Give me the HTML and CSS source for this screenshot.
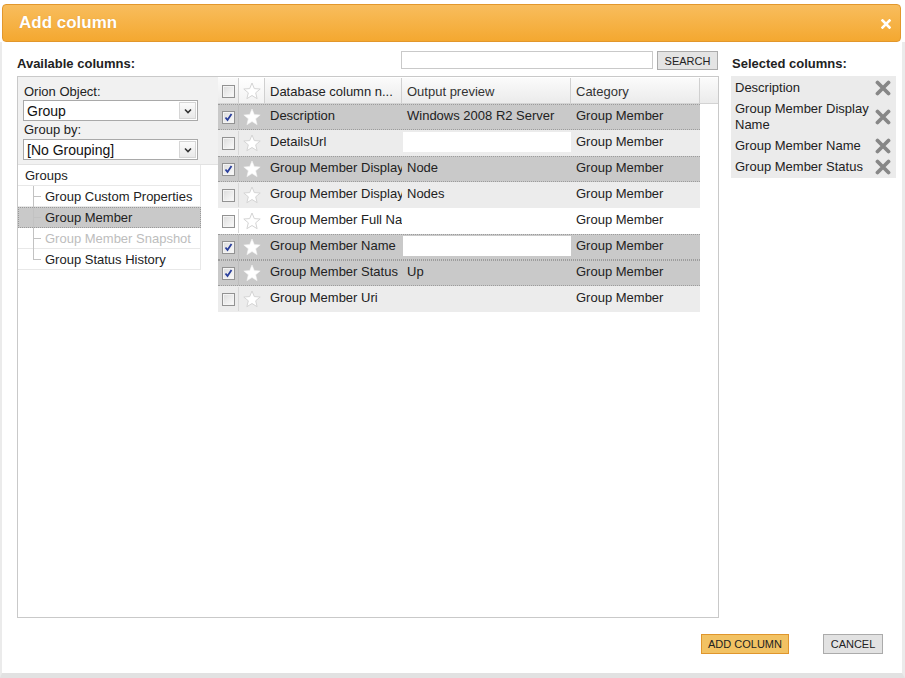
FILE: index.html
```html
<!DOCTYPE html>
<html>
<head>
<meta charset="utf-8">
<title>Add column</title>
<link rel="stylesheet" href="styles.css">
</head>
<body>
<div class="window">
  <div class="titlebar">
    <span class="title">Add column</span>
    <svg class="close" width="10" height="10" viewBox="0 0 10 10"><path d="M1.5 1.5 L8.5 8.5 M8.5 1.5 L1.5 8.5" stroke="#fff" stroke-width="2.6" stroke-linecap="square"/></svg>
  </div>
  <div class="dialog-body">
    <div class="layout">
      <div class="toolbar">
        <div class="section-title">Available columns:</div>
        <input class="search-input" type="text">
        <button class="btn btn-search">SEARCH</button>
      </div>
      <div class="section-title selected-title">Selected columns:</div>

      <div class="main-box">
        <div class="left-pane">
          <div class="filters">
            <div class="filter-label">Orion Object:</div>
            <div class="select"><span class="select-text">Group</span><span class="select-btn"><svg width="8" height="6" viewBox="0 0 8 6"><path d="M1 1.5 L4 4.5 L7 1.5" fill="none" stroke="#333" stroke-width="1.6"/></svg></span></div>
            <div class="filter-label">Group by:</div>
            <div class="select"><span class="select-text">[No Grouping]</span><span class="select-btn"><svg width="8" height="6" viewBox="0 0 8 6"><path d="M1 1.5 L4 4.5 L7 1.5" fill="none" stroke="#333" stroke-width="1.6"/></svg></span></div>
          </div>
          <div class="tree">
            <div class="tree-row tree-root">Groups</div>
            <div class="tree-row tree-child">Group Custom Properties</div>
            <div class="tree-row tree-child is-selected">Group Member</div>
            <div class="tree-row tree-child is-disabled">Group Member Snapshot</div>
            <div class="tree-row tree-child is-last">Group Status History</div>
          </div>
        </div>

        <div class="grid-pane">
          <div class="grid-head">
            <div class="c-cb"><span class="cb"></span></div>
            <div class="c-star head-star"><svg class="star" width="18" height="18" viewBox="0 0 18 18"><polygon points="9,1 11.3,6.6 17.2,7 12.7,10.8 14.1,16.7 9,13.5 3.9,16.7 5.3,10.8 0.8,7 6.7,6.6" fill="#fff" stroke="#d4d4d4" stroke-width="1"/></svg></div>
            <div class="c-name">Database column n...</div>
            <div class="c-prev">Output preview</div>
            <div class="c-cat">Category</div>
            <div class="c-fill"></div>
          </div>

          <div class="grid-row is-sel">
            <div class="c-cb"><span class="cb on"><svg width="9" height="9" viewBox="0 0 9 9"><path d="M1.5 4.5 L3.5 7 L7.5 1" fill="none" stroke="#2a3f9c" stroke-width="1.8"/></svg></span></div>
            <div class="c-star"><svg class="star" width="18" height="18" viewBox="0 0 18 18"><polygon points="9,1 11.3,6.6 17.2,7 12.7,10.8 14.1,16.7 9,13.5 3.9,16.7 5.3,10.8 0.8,7 6.7,6.6" fill="#fff" stroke="#f2f2f2" stroke-width="0.6"/></svg></div>
            <div class="c-name">Description</div>
            <div class="c-prev">Windows 2008 R2 Server</div>
            <div class="c-cat">Group Member</div>
          </div>

          <div class="grid-row is-alt">
            <div class="c-cb"><span class="cb"></span></div>
            <div class="c-star"><svg class="star" width="18" height="18" viewBox="0 0 18 18"><polygon points="9,1 11.3,6.6 17.2,7 12.7,10.8 14.1,16.7 9,13.5 3.9,16.7 5.3,10.8 0.8,7 6.7,6.6" fill="#fff" stroke="#d4d4d4" stroke-width="1"/></svg></div>
            <div class="c-name">DetailsUrl</div>
            <div class="c-prev"><span class="blank"></span></div>
            <div class="c-cat">Group Member</div>
          </div>

          <div class="grid-row is-sel">
            <div class="c-cb"><span class="cb on"><svg width="9" height="9" viewBox="0 0 9 9"><path d="M1.5 4.5 L3.5 7 L7.5 1" fill="none" stroke="#2a3f9c" stroke-width="1.8"/></svg></span></div>
            <div class="c-star"><svg class="star" width="18" height="18" viewBox="0 0 18 18"><polygon points="9,1 11.3,6.6 17.2,7 12.7,10.8 14.1,16.7 9,13.5 3.9,16.7 5.3,10.8 0.8,7 6.7,6.6" fill="#fff" stroke="#f2f2f2" stroke-width="0.6"/></svg></div>
            <div class="c-name">Group Member Display Name</div>
            <div class="c-prev">Node</div>
            <div class="c-cat">Group Member</div>
          </div>

          <div class="grid-row is-alt">
            <div class="c-cb"><span class="cb"></span></div>
            <div class="c-star"><svg class="star" width="18" height="18" viewBox="0 0 18 18"><polygon points="9,1 11.3,6.6 17.2,7 12.7,10.8 14.1,16.7 9,13.5 3.9,16.7 5.3,10.8 0.8,7 6.7,6.6" fill="#fff" stroke="#d4d4d4" stroke-width="1"/></svg></div>
            <div class="c-name">Group Member Display Name</div>
            <div class="c-prev">Nodes</div>
            <div class="c-cat">Group Member</div>
          </div>

          <div class="grid-row">
            <div class="c-cb"><span class="cb"></span></div>
            <div class="c-star"><svg class="star" width="18" height="18" viewBox="0 0 18 18"><polygon points="9,1 11.3,6.6 17.2,7 12.7,10.8 14.1,16.7 9,13.5 3.9,16.7 5.3,10.8 0.8,7 6.7,6.6" fill="#fff" stroke="#d4d4d4" stroke-width="1"/></svg></div>
            <div class="c-name">Group Member Full Name</div>
            <div class="c-prev"></div>
            <div class="c-cat">Group Member</div>
          </div>

          <div class="grid-row is-sel">
            <div class="c-cb"><span class="cb on"><svg width="9" height="9" viewBox="0 0 9 9"><path d="M1.5 4.5 L3.5 7 L7.5 1" fill="none" stroke="#2a3f9c" stroke-width="1.8"/></svg></span></div>
            <div class="c-star"><svg class="star" width="18" height="18" viewBox="0 0 18 18"><polygon points="9,1 11.3,6.6 17.2,7 12.7,10.8 14.1,16.7 9,13.5 3.9,16.7 5.3,10.8 0.8,7 6.7,6.6" fill="#fff" stroke="#f2f2f2" stroke-width="0.6"/></svg></div>
            <div class="c-name">Group Member Name</div>
            <div class="c-prev"><span class="blank"></span></div>
            <div class="c-cat">Group Member</div>
          </div>

          <div class="grid-row is-sel">
            <div class="c-cb"><span class="cb on"><svg width="9" height="9" viewBox="0 0 9 9"><path d="M1.5 4.5 L3.5 7 L7.5 1" fill="none" stroke="#2a3f9c" stroke-width="1.8"/></svg></span></div>
            <div class="c-star"><svg class="star" width="18" height="18" viewBox="0 0 18 18"><polygon points="9,1 11.3,6.6 17.2,7 12.7,10.8 14.1,16.7 9,13.5 3.9,16.7 5.3,10.8 0.8,7 6.7,6.6" fill="#fff" stroke="#f2f2f2" stroke-width="0.6"/></svg></div>
            <div class="c-name">Group Member Status</div>
            <div class="c-prev">Up</div>
            <div class="c-cat">Group Member</div>
          </div>

          <div class="grid-row is-alt">
            <div class="c-cb"><span class="cb"></span></div>
            <div class="c-star"><svg class="star" width="18" height="18" viewBox="0 0 18 18"><polygon points="9,1 11.3,6.6 17.2,7 12.7,10.8 14.1,16.7 9,13.5 3.9,16.7 5.3,10.8 0.8,7 6.7,6.6" fill="#fff" stroke="#d4d4d4" stroke-width="1"/></svg></div>
            <div class="c-name">Group Member Uri</div>
            <div class="c-prev"></div>
            <div class="c-cat">Group Member</div>
          </div>
        </div>
      </div>

      <div class="selected-panel">
        <div class="sel-item"><span class="sel-text">Description</span><svg class="remove" width="16" height="16" viewBox="0 0 16 16"><path d="M2.5 2.5 L13.5 13.5 M13.5 2.5 L2.5 13.5" stroke="#878787" stroke-width="3.8" stroke-linecap="round"/></svg></div>
        <div class="sel-item"><span class="sel-text">Group Member Display Name</span><svg class="remove" width="16" height="16" viewBox="0 0 16 16"><path d="M2.5 2.5 L13.5 13.5 M13.5 2.5 L2.5 13.5" stroke="#878787" stroke-width="3.8" stroke-linecap="round"/></svg></div>
        <div class="sel-item"><span class="sel-text">Group Member Name</span><svg class="remove" width="16" height="16" viewBox="0 0 16 16"><path d="M2.5 2.5 L13.5 13.5 M13.5 2.5 L2.5 13.5" stroke="#878787" stroke-width="3.8" stroke-linecap="round"/></svg></div>
        <div class="sel-item"><span class="sel-text">Group Member Status</span><svg class="remove" width="16" height="16" viewBox="0 0 16 16"><path d="M2.5 2.5 L13.5 13.5 M13.5 2.5 L2.5 13.5" stroke="#878787" stroke-width="3.8" stroke-linecap="round"/></svg></div>
      </div>
    </div>

    <div class="footer">
      <button class="btn btn-primary">ADD COLUMN</button>
      <button class="btn btn-cancel">CANCEL</button>
    </div>
  </div>
</div>
</body>
</html>
```
FILE: styles.css
```css
* { box-sizing: border-box; }
html, body { margin: 0; padding: 0; background: #fff; }
body {
  font-family: "Liberation Sans", Arial, sans-serif;
  font-size: 13px;
  color: #333;
}
.window { width: 905px; height: 678px; }

.titlebar {
  margin: 4px 4px 0 2px;
  height: 38px;
  border: 1px solid #e2972c;
  border-radius: 4px;
  background: linear-gradient(#f8bd5d, #f4a830);
  display: flex;
  align-items: center;
  justify-content: space-between;
  padding: 0 9px 0 16px;
}
.title {
  color: #fff;
  font-weight: bold;
  font-size: 17px;
  text-shadow: 0 0 1px rgba(150, 90, 0, 0.3);
}
.close { display: block; margin-top: 1px; }

.dialog-body {
  height: 636px;
  border-left: 2px solid #ebebeb;
  border-right: 3px solid #ebebeb;
  border-bottom: 5px solid #e2e2e2;
  padding: 9px 0 0 15px;
}
.layout {
  display: grid;
  grid-template-columns: 702px 165px;
  grid-template-rows: 25px 542px;
  column-gap: 12px;
}
.section-title {
  font-weight: bold;
  font-size: 13px;
  color: #222;
  padding-top: 5px;
}
.selected-title { padding-left: 1px; }
.toolbar { display: flex; align-items: flex-start; }
.toolbar .section-title { flex: 1; }
.search-input {
  width: 252px;
  height: 18px;
  border: 1px solid #c9c9c9;
  margin: 0 0 0 -1px;
  padding: 0 3px;
  font: inherit;
}
.btn {
  font-family: "Liberation Sans", Arial, sans-serif;
  font-size: 11px;
  color: #222;
  padding: 0;
  margin: 0;
  cursor: pointer;
}
.btn-search {
  width: 61px;
  height: 19px;
  margin-left: 4px;
  margin-right: 1px;
  background: #e4e4e4;
  border: 1px solid #ababab;
}

.main-box {
  border: 1px solid #c9c9c9;
  display: flex;
}
.left-pane { width: 200px; flex: none; }
.filters {
  background: #f1f1f1;
  height: 88px;
  padding: 7px 0 0 5px;
  border-bottom: 1px solid #e2e2e2;
}
.filter-label { line-height: 15px; color: #222; padding-left: 1px; }
.select {
  width: 175px;
  height: 21px;
  border: 1px solid #a9a9a9;
  background: #fff;
  display: flex;
  align-items: center;
  justify-content: space-between;
  margin: 1px 0 1px;
  padding: 0 1px 0 3px;
}
.filters .filter-label + .select + .filter-label + .select { margin-top: 2px; }
.select-text { font-size: 14px; color: #111; }
.select-btn {
  width: 17px;
  height: 17px;
  border: 1px solid #d6d6d6;
  background: linear-gradient(#fbfbfb, #e9e9e9);
  display: flex;
  align-items: center;
  justify-content: center;
}
.select-btn svg { display: block; }

.tree { width: 183px; }
.tree-row {
  height: 21px;
  line-height: 21px;
  border-bottom: 1px solid #e8e8e8;
  border-right: 1px solid #e8e8e8;
  color: #222;
  white-space: nowrap;
}
.tree-root { padding-left: 7px; }
.tree-child { padding-left: 27px; position: relative; }
.tree-child::before {
  content: "";
  position: absolute;
  left: 15px;
  top: 0;
  bottom: -1px;
  border-left: 1px solid #c2c2c2;
}
.tree-child::after {
  content: "";
  position: absolute;
  left: 15px;
  top: 10px;
  width: 8px;
  border-top: 1px solid #c2c2c2;
}
.tree-child.is-last::before { bottom: 10px; }
.tree-child.is-selected {
  background: #c9c9c9;
  border: 1px dotted #9a9a9a;
  line-height: 19px;
  padding-left: 26px;
}
.tree-child.is-selected::before { left: 14px; top: -1px; }
.tree-child.is-selected::after { left: 14px; top: 9px; }
.tree-child.is-disabled { color: #bdbdbd; }

.grid-pane { width: 500px; padding-top: 1px; }
.grid-head {
  display: flex;
  height: 26px;
  background: linear-gradient(#fbfbfb, #ebebeb);
  border-bottom: 1px solid #d3d3d3;
}
.grid-head > div {
  border-right: 1px solid #d0d0d0;
  display: flex;
  align-items: center;
  padding-top: 1px;
}
.grid-head .head-star { background: linear-gradient(#ffffff, #f2f2f2); }
.grid-head .c-fill { width: 18px; border-right: none; }

.c-cb { width: 21px; flex: none; display: flex; align-items: center; padding-left: 4px; border-right: 1px solid #dcdcdc; }
.c-star { width: 26px; flex: none; display: flex; align-items: center; justify-content: center; }
.c-name { width: 137px; flex: none; padding-left: 5px; white-space: nowrap; overflow: hidden; }
.c-prev { width: 169px; flex: none; padding-left: 5px; white-space: nowrap; overflow: hidden; }
.c-cat { width: 129px; flex: none; padding-left: 5px; white-space: nowrap; overflow: hidden; }
.grid-head .c-name { color: #222; }

.cb {
  width: 13px;
  height: 13px;
  border: 1px solid #929292;
  background: linear-gradient(135deg, #dcdcdc, #fbfbfb);
  box-shadow: inset 0 0 0 1px #f4f4f4;
  display: flex;
  align-items: center;
  justify-content: center;
}
.cb svg { display: block; }
.star { display: block; }

.grid-row {
  display: flex;
  width: 482px;
  height: 26px;
  background: #fff;
  border-top: 1px solid transparent;
  border-bottom: 1px solid transparent;
  color: #222;
}
.grid-row > div { display: flex; align-items: center; }
.grid-row .c-name, .grid-row .c-prev, .grid-row .c-cat { display: block; line-height: 22px; }
.grid-row.is-alt { background: #ececec; }
.grid-row.is-sel {
  background: #c9c9c9;
  border-top: 1px dotted #9c9c9c;
  border-bottom: 1px dotted #9c9c9c;
}
.grid-row .c-cb { border-right: 1px solid #d8d8d8; }
.grid-row.is-sel .c-cb { border-right-color: #bdbdbd; }
.grid-row .c-prev { padding-left: 1px; text-indent: 4px; }
.blank {
  display: block;
  width: 168px;
  height: 20px;
  margin-top: 1px;
  background: #fff;
}

.selected-panel {
  align-self: start;
  background: #ebebeb;
  padding: 1px 5px 1px 4px;
}
.sel-item {
  display: flex;
  align-items: center;
  justify-content: space-between;
  padding: 3px 0 2px;
  line-height: 16px;
  color: #222;
}
.sel-text { width: 136px; }
.remove { display: block; flex: none; }

.footer {
  display: flex;
  justify-content: flex-end;
  gap: 34px;
  margin-top: 16px;
  padding-right: 19px;
}
.btn-primary {
  width: 88px;
  height: 20px;
  background: #f2c263;
  border: 1px solid #e0962c;
}
.btn-cancel {
  width: 60px;
  height: 20px;
  background: #e2e2e2;
  border: 1px solid #ababab;
}
```
